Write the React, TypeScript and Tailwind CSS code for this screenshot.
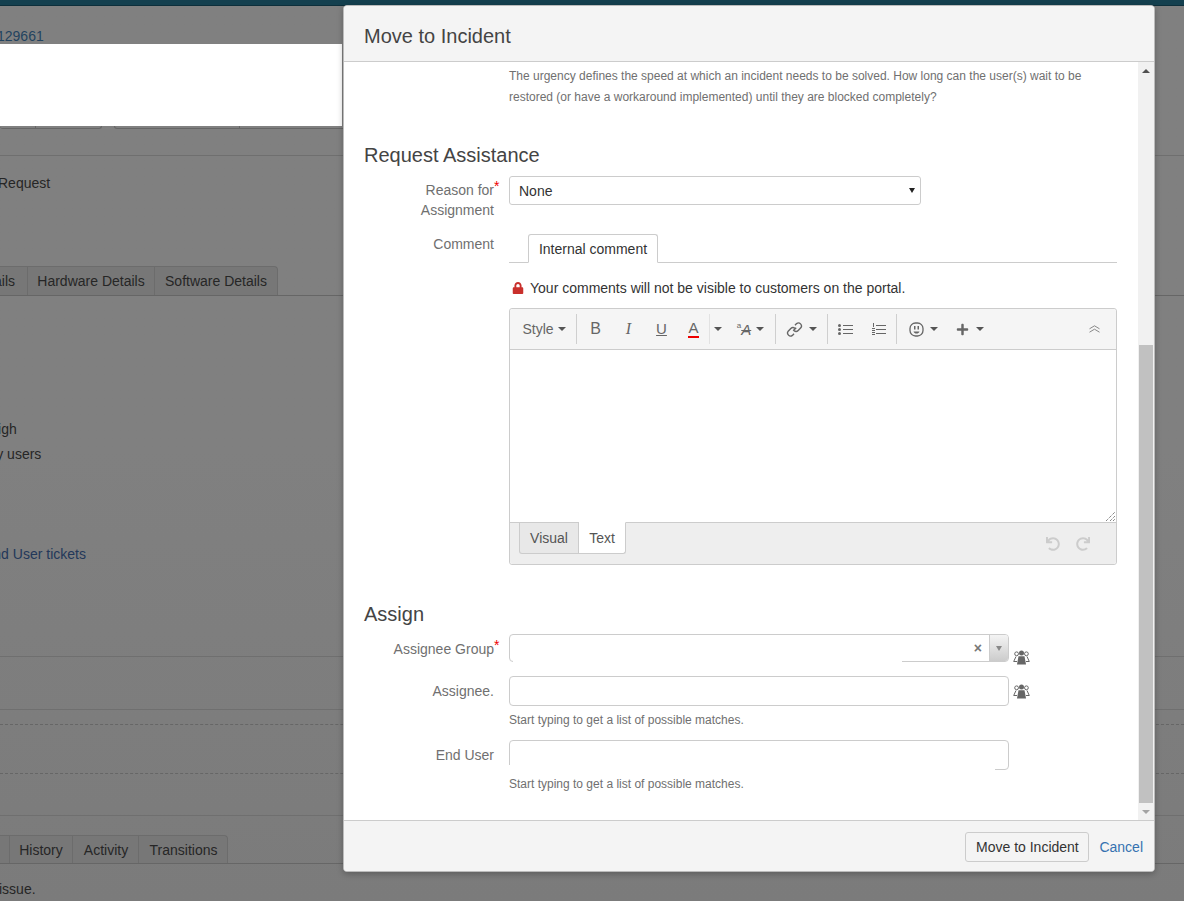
import React from "react";
import { FaLock, FaPlus, FaUndo, FaRedo } from "react-icons/fa";

function Caret() {
  return <span className="inline-block h-0 w-0 border-x-[4px] border-t-[4px] border-x-transparent border-t-[#555]" />;
}

function Sep({ faint }: { faint?: boolean }) {
  return <div className={`h-[30px] w-px shrink-0 ${faint ? "bg-[#e2e2e2]" : "bg-[#cfcfcf]"}`} />;
}

function ToolButton({ width, gap, children }: { width: string; gap?: string; children: React.ReactNode }) {
  return <div className={`flex h-full shrink-0 items-center justify-center text-[#666] ${gap ?? "gap-[5px]"} ${width}`}>{children}</div>;
}

function ChainLink() {
  return (
    <svg width="17" height="17" viewBox="0 0 17 17" fill="none" stroke="#666" strokeWidth="1.4">
      <path d="M7.2 9.8l3-3" />
      <path d="M9 4.2l1.6-1.6a3 3 0 0 1 4.2 4.2l-2.6 2.6a3 3 0 0 1-4.2 0" />
      <path d="M8 12.8l-1.6 1.6a3 3 0 0 1-4.2-4.2l2.6-2.6a3 3 0 0 1 4.2 0" />
    </svg>
  );
}

function CollapseIcon() {
  return (
    <svg width="11" height="8" viewBox="0 0 11 8" fill="none" stroke="#888" strokeWidth="1">
      <path d="M0.5 3.8L5.5 0.8L10.5 3.8" />
      <path d="M0.5 7.2L5.5 4.2L10.5 7.2" />
    </svg>
  );
}

function UsersIcon() {
  return (
    <svg width="17" height="15" viewBox="0 0 17 15" className="shrink-0">
      <circle cx="3.6" cy="3.8" r="1.9" fill="none" stroke="#666" strokeWidth="1" />
      <circle cx="13.4" cy="3.8" r="1.9" fill="none" stroke="#666" strokeWidth="1" />
      <path d="M3 6.5L0.7 11.5H4" fill="none" stroke="#666" strokeWidth="1" />
      <path d="M14 6.5L16.3 11.5H13" fill="none" stroke="#666" strokeWidth="1" />
      <circle cx="8.5" cy="3" r="2.5" fill="#666" />
      <path d="M5.5 6.2h6l1.5 8.3h-9z" fill="#666" />
    </svg>
  );
}

function BulletList() {
  return (
    <svg width="15" height="13" viewBox="0 0 15 13" fill="#666">
      <rect x="0" y="1" width="3" height="3" rx="1.5" />
      <rect x="0" y="5" width="3" height="3" rx="1.5" />
      <rect x="0" y="9" width="3" height="3" rx="1.5" />
      <rect x="5" y="2" width="10" height="1" />
      <rect x="5" y="6" width="10" height="1" />
      <rect x="5" y="10" width="10" height="1" />
    </svg>
  );
}

function NumberList() {
  return (
    <svg width="14" height="13" viewBox="0 0 14 13" fill="#666">
      <rect x="1" y="0" width="1" height="4" />
      <rect x="0" y="5" width="3" height="1" />
      <rect x="0" y="7" width="3" height="1" />
      <rect x="0" y="9" width="3" height="1" />
      <rect x="0" y="11" width="3" height="1" />
      <rect x="4" y="2" width="10" height="1" />
      <rect x="4" y="6" width="10" height="1" />
      <rect x="4" y="10" width="10" height="1" />
    </svg>
  );
}

function Smiley() {
  return (
    <svg width="15" height="15" viewBox="0 0 15 15" fill="none" stroke="#666">
      <rect x="1" y="1" width="13" height="13" rx="5.5" strokeWidth="1.3" />
      <rect x="5" y="4" width="1.5" height="3.5" fill="#666" stroke="none" />
      <rect x="8.5" y="4" width="1.5" height="3.5" fill="#666" stroke="none" />
      <path d="M4.5 9.5h6c-.6 1.5-1.6 2-3 2s-2.4-.5-3-2z" fill="#666" stroke="none" />
    </svg>
  );
}

function Toolbar() {
  return (
    <div className="flex h-[41px] items-center rounded-t-[3px] border-b border-[#ccc] bg-[#f5f5f5] text-sm">
      <ToolButton width="w-[66px]" gap="gap-[4px] pl-[2px]">
        <span>Style</span>
        <Caret />
      </ToolButton>
      <Sep />
      <div className="w-[2px]" />
      <ToolButton width="w-[33px]"><span className="text-base">B</span></ToolButton>
      <ToolButton width="w-[33px]"><span className="font-['Liberation_Serif',serif] text-base italic">I</span></ToolButton>
      <ToolButton width="w-[33px]"><span className="text-[15px] underline">U</span></ToolButton>
      <ToolButton width="w-[31px]">
        <span className="border-b-2 border-[#e00] text-[15px] leading-[16px]">A</span>
      </ToolButton>
      <Sep faint />
      <ToolButton width="w-[16px]"><Caret /></ToolButton>
      <ToolButton width="w-[49px]">
        <span className="flex items-start leading-none">
          <span className="text-[8px]">a</span>
          <span className="text-[15px] italic line-through">A</span>
        </span>
        <Caret />
      </ToolButton>
      <Sep />
      <ToolButton width="w-[51px]" gap="gap-[6px]">
        <ChainLink />
        <Caret />
      </ToolButton>
      <Sep />
      <div className="w-px" />
      <ToolButton width="w-[33px]"><BulletList /></ToolButton>
      <ToolButton width="w-[34px]"><NumberList /></ToolButton>
      <Sep />
      <ToolButton width="w-[53px]" gap="gap-[6px]">
        <Smiley />
        <Caret />
      </ToolButton>
      <ToolButton width="w-[39px]" gap="gap-[7px]">
        <FaPlus size={13} />
        <Caret />
      </ToolButton>
      <div className="ml-auto flex w-[44px] justify-center">
        <CollapseIcon />
      </div>
    </div>
  );
}

function Editor() {
  return (
    <div className="mt-[10px] w-[608px] rounded-[3px] border border-[#ccc]">
      <Toolbar />
      <div className="relative h-[172px] bg-white">
        <svg className="absolute right-px bottom-px" width="9" height="9" viewBox="0 0 9 9" stroke="#555" strokeWidth="1">
          <path d="M0 9L9 0M4 9L9 4M7 9L9 7" strokeDasharray="1 1" />
        </svg>
      </div>
      <div className="flex h-[42px] rounded-b-[3px] border-t border-[#ccc] bg-[#eee] pl-[9px]">
        <div className="flex h-[31px] w-[60px] items-center justify-center rounded-bl-[3px] border-r border-b border-l border-[#ccc] bg-[#e8e8e8] text-sm text-[#555]">Visual</div>
        <div className="-mt-px flex h-[32px] w-[47px] items-center justify-center rounded-br-[3px] border-t border-r border-b border-t-white border-[#ccc] bg-white text-sm text-[#555]">Text</div>
        <div className="ml-auto flex items-center gap-[16px] pt-[1px] pr-[26px] text-[#ccc]">
          <FaUndo size={14} />
          <FaRedo size={14} />
        </div>
      </div>
    </div>
  );
}

function Star() {
  return (
    <span className="relative inline-block w-0">
      <span className="absolute -top-[19px] left-0 text-[#e00]">*</span>
    </span>
  );
}

function Label({ children, className }: { children: React.ReactNode; className?: string }) {
  return <div className={`w-[130px] shrink-0 text-right text-sm leading-[20px] text-[#707070] ${className ?? ""}`}>{children}</div>;
}

function Modal() {
  return (
    <div className="absolute top-[5px] left-[343px] flex h-[867px] w-[812px] flex-col overflow-hidden rounded-[4px] border border-[#bbb] bg-white text-[#333] shadow-[0_2px_6px_rgba(0,0,0,0.25)]">
      <div className="flex h-[56px] shrink-0 items-center border-b border-[#ccc] bg-[#f4f4f4] pt-[4px] pl-5 text-xl text-[#444]">Move to Incident</div>

      <div className="flex min-h-0 flex-1">
        <div className="flex-1 pl-5">
          <p className="mt-[4px] ml-[145px] w-[600px] text-xs leading-[21px] text-[#707070]">
            The urgency defines the speed at which an incident needs to be solved. How long can the user(s) wait to be
            restored (or have a workaround implemented) until they are blocked completely?
          </p>

          <h2 className="mt-[34px] text-xl leading-[26px] text-[#444]">Request Assistance</h2>

          <div className="mt-[8px] flex">
            <Label className="pt-[4px]">Reason for<Star /><br />Assignment</Label>
            <div className="relative ml-[15px] flex h-[29px] w-[412px] items-center justify-between rounded-[3px] border border-[#ccc] bg-white pr-[5px] pl-[9px] text-sm">
              <span>None</span>
              <span className="h-0 w-0 border-x-[3px] border-t-[5px] border-x-transparent border-t-[#222]" />
            </div>
          </div>

          <div className="mt-[14px] flex">
            <Label>Comment</Label>
            <div className="ml-[15px] flex-1">
              <div className="-mt-px h-[30px] w-[608px] border-b border-[#ccc] pt-px pl-[19px]">
                <div className="flex h-[29px] w-[130px] items-center justify-center rounded-t-[3px] border border-b-white border-[#ccc] bg-white text-sm">Internal comment</div>
              </div>
              <div className="mt-[15px] flex items-center gap-[6px] pl-[3px] text-sm leading-[20px]">
                <FaLock size={12} className="text-[#c9302c]" />
                <span>Your comments will not be visible to customers on the portal.</span>
              </div>
              <Editor />
            </div>
          </div>

          <h2 className="mt-[36px] text-xl leading-[26px] text-[#444]">Assign</h2>

          <div className="mt-[7px] flex">
            <Label className="pt-[5px]">Assignee Group<Star /></Label>
            <div className="relative ml-[15px] flex h-[28px] w-[500px] items-center justify-end rounded-[4px] border border-[#ccc]">
              <span className="pr-[7px] text-sm leading-none font-bold text-[#777]">×</span>
              <div className="flex h-full w-[19px] items-center justify-center rounded-r-[3px] border-l border-[#ccc] bg-gradient-to-b from-[#f4f4f4] to-[#ccc]">
                <span className="h-0 w-0 border-x-[3px] border-t-[5px] border-x-transparent border-t-[#888]" />
              </div>
              <div className="absolute bottom-[-1px] left-[3px] h-px w-[389px] bg-white" />
            </div>
            <div className="mt-[16px] ml-[4px]"><UsersIcon /></div>
          </div>

          <div className="mt-[11px] flex">
            <Label className="pt-[5px]">Assignee.</Label>
            <div className="ml-[15px] h-[30px] w-[500px] rounded-[4px] border border-[#ccc]" />
            <div className="mt-[8px] ml-[4px]"><UsersIcon /></div>
          </div>
          <p className="mt-[7px] ml-[145px] text-xs leading-[15px] text-[#707070]">Start typing to get a list of possible matches.</p>

          <div className="mt-[12px] flex">
            <Label className="pt-[5px]">End User</Label>
            <div className="relative ml-[15px] h-[30px] w-[500px] rounded-[4px] border border-[#ccc]">
              <div className="absolute bottom-[-1px] left-[-1px] h-[5px] w-[486px] bg-white" />
            </div>
          </div>
          <p className="mt-[7px] ml-[145px] text-xs leading-[15px] text-[#707070]">Start typing to get a list of possible matches.</p>
        </div>

        <div className="flex w-[16px] shrink-0 flex-col bg-[#f1f1f1]">
          <div className="flex h-[17px] shrink-0 items-center justify-center">
            <span className="h-0 w-0 border-x-[4px] border-b-[4px] border-x-transparent border-b-[#505050]" />
          </div>
          <div className="mx-px mt-[266px] flex-1 bg-[#c1c1c1]" />
          <div className="flex h-[17px] shrink-0 items-center justify-center">
            <span className="h-0 w-0 border-x-[4px] border-t-[4px] border-x-transparent border-t-[#a3a3a3]" />
          </div>
        </div>
      </div>

      <div className="flex h-[51px] shrink-0 items-center justify-end gap-[10px] border-t border-[#ccc] bg-[#f4f4f4] pt-[2px] pr-[11px] text-sm">
        <div className="flex h-[30px] w-[124px] items-center justify-center rounded-[3px] border border-[#ccc] bg-[#f4f4f4] text-[#333]">Move to Incident</div>
        <span className="text-[#3572b0]">Cancel</span>
      </div>
    </div>
  );
}

function DimTab({ children, width }: { children: React.ReactNode; width: string }) {
  return <div className={`flex h-full shrink-0 items-center justify-center border-t border-r border-[#6c6c6c] bg-[#777] ${width}`}>{children}</div>;
}

function PageBehind() {
  return (
    <div className="flex h-[901px] flex-col overflow-hidden bg-gradient-to-b from-[#808080] via-[#808080] to-[#7b7b7b] text-sm text-[#262626]">
      <div className="h-[6px] shrink-0 border-b border-[#0d2f3b] bg-[#14404f]" />
      <div className="h-[38px] shrink-0 pt-[22px] leading-[16px] text-[#23435f]">
        <span className="-ml-[3px] block">129661</span>
      </div>
      <div className="h-[82px] w-[342px] shrink-0 bg-white" />
      <div className="flex h-[3px] shrink-0">
        <div className="h-full w-[36px] rounded-bl border-r border-b border-[#666]" />
        <div className="h-full w-[66px] rounded-br border-r border-b border-[#666]" />
        <div className="ml-[12px] h-full w-[126px] rounded-bl border-r border-b border-l border-[#666]" />
        <div className="h-full w-[104px] border-b border-[#666]" />
      </div>
      <div className="h-[27px] shrink-0 border-b border-[#6f6f6f]" />
      <div className="h-[110px] shrink-0 pt-[18px] leading-[18px]">
        <span className="-ml-[2px] block">Request</span>
      </div>
      <div className="flex h-[30px] shrink-0 border-b border-[#666]">
        <DimTab width="w-[28px]"><span className="-ml-[18px]">ails</span></DimTab>
        <DimTab width="w-[127px]">Hardware Details</DimTab>
        <DimTab width="w-[123px] rounded-tr">Software Details</DimTab>
      </div>
      <div className="h-[123px] shrink-0" />
      <div className="-ml-[12px] h-[25px] shrink-0 leading-[20px]">High</div>
      <div className="-ml-[31px] h-[100px] shrink-0 leading-[20px]">Many users</div>
      <div className="-ml-[16px] h-[25px] shrink-0 leading-[20px] text-[#23385a]">End User tickets</div>
      <div className="h-[88px] shrink-0 border-b border-[#6f6f6f]" />
      <div className="h-[53px] shrink-0 border-b border-[#6f6f6f]" />
      <div className="h-[15px] shrink-0 border-b border-dashed border-[#666]" />
      <div className="h-[49px] shrink-0 border-b border-dashed border-[#666]" />
      <div className="h-[42px] shrink-0 border-b border-[#6f6f6f]" />
      <div className="h-[19px] shrink-0" />
      <div className="flex h-[29px] shrink-0 border-b border-[#666]">
        <DimTab width="w-[10px]"> </DimTab>
        <DimTab width="w-[63px]">History</DimTab>
        <DimTab width="w-[66px] pl-px">Activity</DimTab>
        <DimTab width="w-[89px] rounded-tr pl-px">Transitions</DimTab>
      </div>
      <div className="-ml-px pt-[15px] leading-[20px]">issue.</div>
    </div>
  );
}

export default function App() {
  return (
    <div className="relative h-[901px] w-[1184px] overflow-hidden font-['Liberation_Sans',Arial,sans-serif]">
      <PageBehind />
      <Modal />
    </div>
  );
}
